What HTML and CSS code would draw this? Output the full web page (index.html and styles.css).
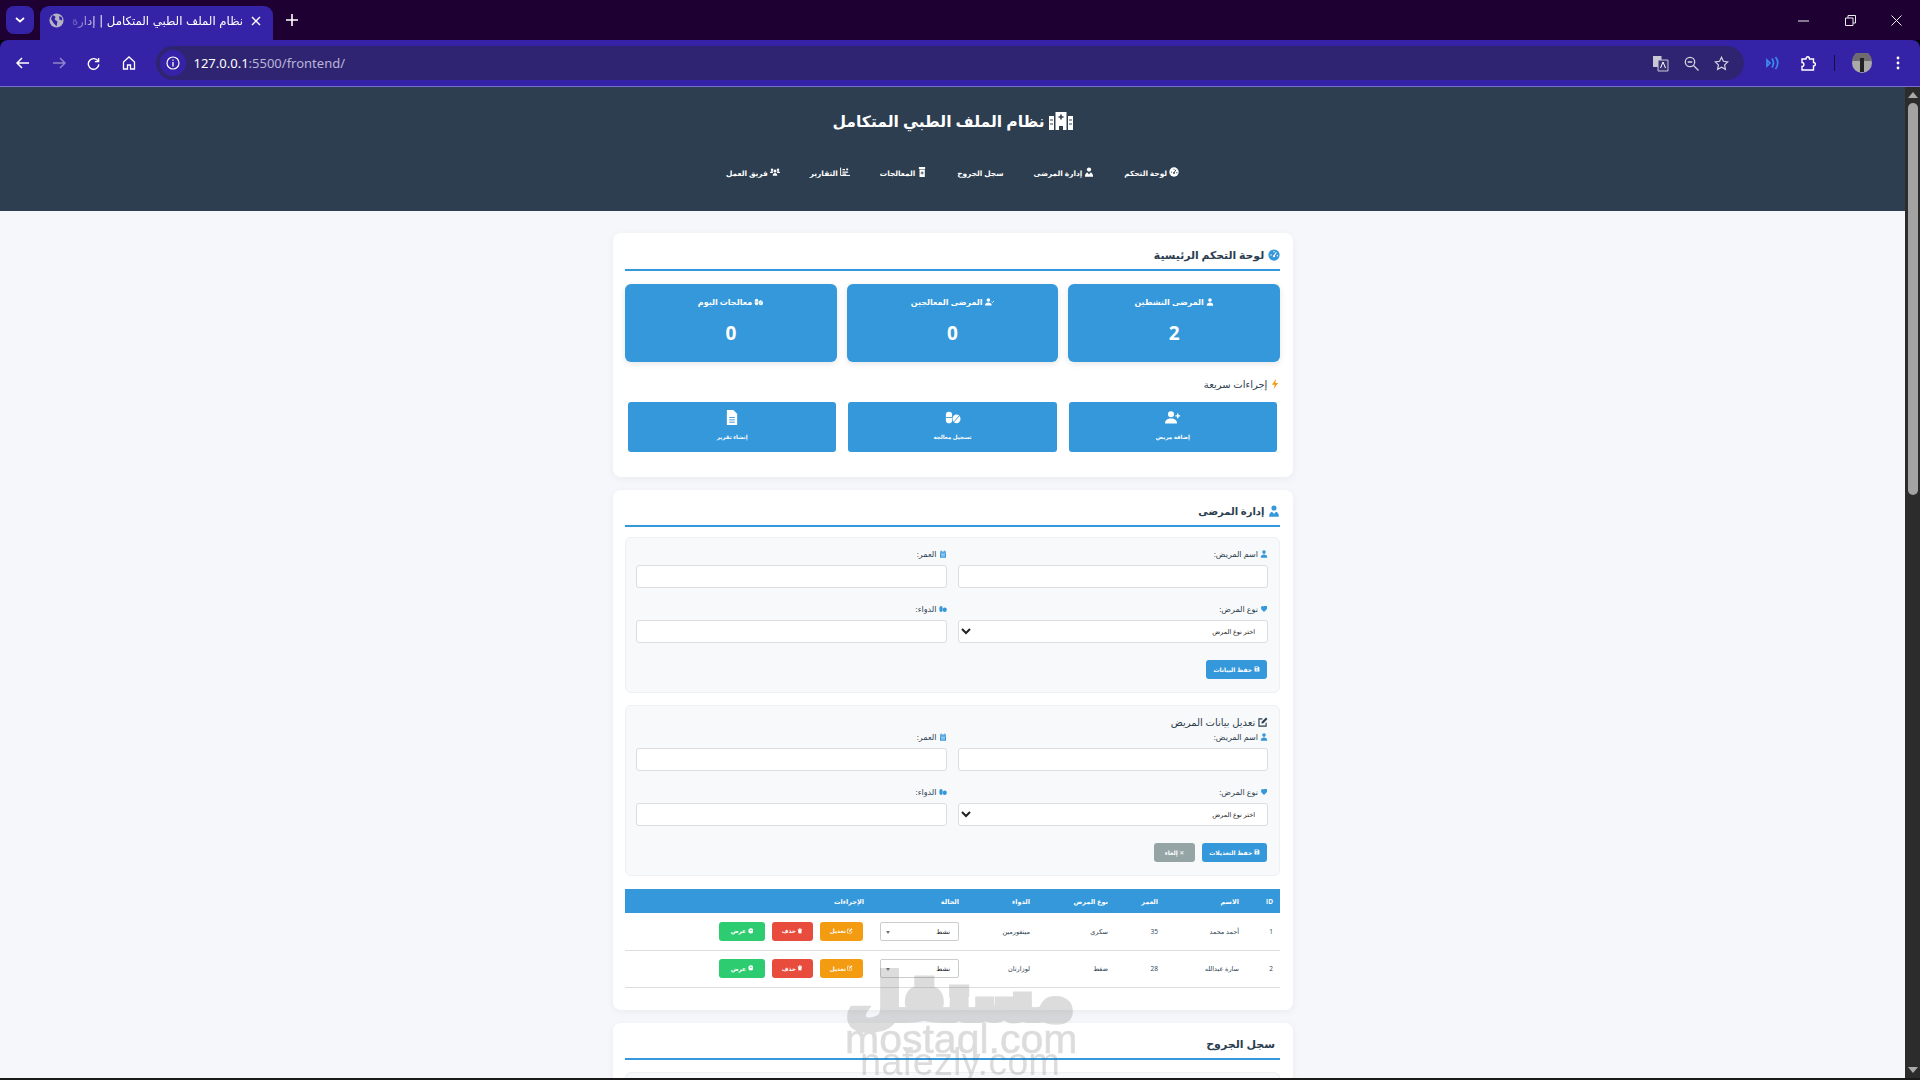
FILE: index.html
```html
<!DOCTYPE html>
<html lang="ar">
<head>
<meta charset="utf-8">
<title>نظام الملف الطبي المتكامل</title>
<link rel="stylesheet" href="styles.css">
</head>
<body>
<svg class="sprite" width="0" height="0" aria-hidden="true">
  <symbol id="i-user" viewBox="0 0 16 16"><circle cx="8" cy="4.2" r="3.6" fill="currentColor"/><path d="M1.500 15.500c0-4.400 2.600-6.300 6.500-6.300s6.500 1.900 6.500 6.300z" fill="currentColor"/></symbol>
  <symbol id="i-doctor" viewBox="0 0 16 16"><circle cx="8" cy="4" r="3.400" fill="currentColor"/><path d="M1.500 15.500c0-4.400 2-6.200 4-6.600L8 12l2.500-3.100c2 .4 4 2.200 4 6.600z" fill="currentColor"/></symbol>
  <symbol id="i-gauge" viewBox="0 0 16 16"><circle cx="8" cy="8" r="7.500" fill="currentColor"/><path d="M8 9l3.200-4.600" stroke="var(--cut,#fff)" stroke-width="1.500"/><circle cx="8" cy="9.500" r="1.500" fill="var(--cut,#fff)"/><circle cx="4" cy="8" r=".9" fill="var(--cut,#fff)"/><circle cx="8" cy="3.500" r=".9" fill="var(--cut,#fff)"/><circle cx="12.500" cy="9" r=".9" fill="var(--cut,#fff)"/></symbol>
  <symbol id="i-pills" viewBox="0 0 18 16"><rect x="1" y="1.500" width="7" height="13" rx="3.500" fill="currentColor"/><ellipse cx="13" cy="9.500" rx="4.500" ry="5" fill="currentColor"/><path d="M1 8h7M10 13l6-7" stroke="var(--cut,#3498db)" stroke-width="1"/></symbol>
  <symbol id="i-file" viewBox="0 0 14 16"><path d="M1.500 0H8.500L12.500 4V16H1.500z" fill="currentColor"/><path d="M4 8h6M4 10.500h6M4 13h6" stroke="#3498db"/></symbol>
  <symbol id="i-save" viewBox="0 0 16 16"><path d="M1.500 1.500h10l3 3v10h-13z" fill="currentColor"/><rect x="4" y="3" width="6" height="3" fill="#3498db"/><circle cx="8" cy="10.500" r="2" fill="#3498db"/></symbol>
  <symbol id="i-edit" viewBox="0 0 16 16"><path d="M13 9v5.500H1.500V3H7" fill="none" stroke="currentColor" stroke-width="1.800"/><path d="M6 7.500 12.800.8l2.400 2.400L8.500 10 5.500 10.500z" fill="currentColor"/></symbol>
  <symbol id="i-trash" viewBox="0 0 14 16"><path d="M1 2.500h12v2H1zM5 1h4v2H5zM2 5.500h10L11 15.500H3z" fill="currentColor"/></symbol>
  <symbol id="i-eye" viewBox="0 0 16 16"><circle cx="8" cy="8" r="7" fill="currentColor"/><circle cx="8" cy="6.500" r="2" fill="#2ecc71"/></symbol>
  <symbol id="i-cal" viewBox="0 0 14 16"><path d="M1 3h12v12.500H1z" fill="currentColor"/><path d="M3.500 1v3M10.500 1v3" stroke="currentColor" stroke-width="1.500"/><path d="M1 6h12M3 9h8M3 12h8M5 7v7M9 7v7" stroke="#f8f9fa" stroke-width=".8"/></symbol>
  <symbol id="i-tag" viewBox="0 0 16 16"><path d="M2 8 8 2h6v6l-6 6z" fill="currentColor"/><circle cx="5" cy="5" r="3" fill="currentColor"/></symbol>
  <symbol id="i-hospital" viewBox="0 0 24 18"><path d="M0 4h5v14H0zM19 4h5v14h-5zM6.500 0h11v18h-3.500v-4h-4v4H6.500z" fill="currentColor"/><path d="M12 2.500v5M9.500 5h5" stroke="#2c3e50" stroke-width="1.600"/><path d="M1 8h3M1 12h3M20 8h3M20 12h3" stroke="#2c3e50"/></symbol>
  <symbol id="i-chart" viewBox="0 0 16 14"><path d="M1 0v12.500h15" fill="none" stroke="currentColor" stroke-width="1.600"/><path d="M4 2h4v2H4zM4 6h9v2H4zM4 9.500h6v1.800H4zM10 1.500h3v2.500h-3z" fill="currentColor"/></symbol>
  <symbol id="i-bottle" viewBox="0 0 14 16"><path d="M2 0h10v3H2zM3 4h8.500v12H3z" fill="currentColor"/><path d="M7.200 7v5M4.800 9.500h5" stroke="#2c3e50" stroke-width="1.300"/></symbol>
  <symbol id="i-team" viewBox="0 0 20 16"><circle cx="10" cy="6" r="3" fill="currentColor"/><circle cx="4" cy="3.500" r="2.500" fill="currentColor"/><circle cx="16" cy="3.500" r="2.500" fill="currentColor"/><path d="M5.500 15.500c0-4 1.500-5.500 4.500-5.500s4.500 1.500 4.500 5.500zM0 10c0-2.500 1.500-3.500 4-3.500 1 0 1.500.2 2 .5-.5 1-.5 2 0 3H0zM20 10c0-2.500-1.500-3.500-4-3.500-1 0-1.500.2-2 .5.500 1 .500 2 0 3h6z" fill="currentColor"/></symbol>
  <symbol id="i-usercheck" viewBox="0 0 20 16"><circle cx="7" cy="4" r="3.700" fill="currentColor"/><path d="M0 15.500c0-4.400 3-6.300 7-6.300s7 1.900 7 6.300z" fill="currentColor"/><path d="M13.500 7l2.200 2.200 3.800-4.200" fill="none" stroke="currentColor" stroke-width="1.600"/></symbol>
  <symbol id="i-userplus" viewBox="0 0 20 16"><circle cx="7.500" cy="4" r="3.800" fill="currentColor"/><path d="M0 15.500c0-4.400 3-6.300 7.500-6.300s7.500 1.900 7.500 6.300z" fill="currentColor"/><path d="M16 3v6M13 6h6" stroke="currentColor" stroke-width="1.800"/></symbol>
  <symbol id="i-bolt" viewBox="0 0 12 16"><path d="M7.500 0 1 9h4.500L4 16l7-9.500H6.500z" fill="currentColor"/></symbol>
</svg>

<header class="browser">
  <div class="tabstrip">
    <button class="tab-search"><svg width="10" height="6" viewBox="0 0 10 6"><path d="M1 1l4 3.500L9 1" fill="none" stroke="#fff" stroke-width="1.700"/></svg></button>
    <div class="tab">
      <svg width="15" height="15" viewBox="0 0 16 16"><circle cx="8" cy="8" r="7.500" fill="#b4b3c4"/><path d="M4 2l3 2-1 3 3 2-1 5-3-3-3-5zM11 3l3 2v3l-3-1z" fill="#3423a6"/></svg>
      <span class="tab-title">نظام الملف الطبي المتكامل | إدارة</span>
      <svg width="10" height="10" viewBox="0 0 10 10"><path d="M1 1l8 8M9 1l-8 8" stroke="#fff" stroke-width="1.400"/></svg>
    </div>
    <svg class="newtab" width="12" height="12" viewBox="0 0 12 12"><path d="M6 0v12M0 6h12" stroke="#fff" stroke-width="1.600"/></svg>
    <div class="win-controls">
      <svg width="12" height="2" viewBox="0 0 12 2"><path d="M0 1h11" stroke="#eee"/></svg>
      <svg width="11" height="11" viewBox="0 0 11 11"><path d="M.5 3h7.500v7.500H.5zM3 3V.5h7.500V8H8" fill="none" stroke="#eee"/></svg>
      <svg width="11" height="11" viewBox="0 0 11 11"><path d="M.5.5l10 10M10.500.5l-10 10" stroke="#eee"/></svg>
    </div>
  </div>
  <div class="toolbar">
    <div class="nav-icons">
      <svg width="14" height="12" viewBox="0 0 14 12"><path d="M13 6H1.500M6 1 1 6l5 5" fill="none" stroke="#fff" stroke-width="1.500"/></svg>
      <svg width="14" height="12" viewBox="0 0 14 12"><path d="M1 6h11.500M8 1l5 5-5 5" fill="none" stroke="#8f86c9" stroke-width="1.500"/></svg>
      <svg width="13" height="13" viewBox="0 0 14 14"><path d="M12 4.500A5.700 5.700 0 1 0 12.800 8M12.500 1v4h-4" fill="none" stroke="#fff" stroke-width="1.500"/></svg>
      <svg width="14" height="14" viewBox="0 0 14 14"><path d="M1.500 13V6L7 1l5.500 5v7H8.500V9h-3v4z" fill="none" stroke="#fff" stroke-width="1.300"/></svg>
    </div>
    <div class="omnibox">
      <span class="site-info"><svg width="14" height="14" viewBox="0 0 14 14"><circle cx="7" cy="7" r="6" fill="none" stroke="#fff" stroke-width="1.200"/><path d="M7 6v4.500M7 3.500v1.300" stroke="#fff" stroke-width="1.300"/></svg></span>
      <span class="url"><b>127.0.0.1</b>:5500/frontend/</span>
      <div class="omni-actions">
        <svg width="17" height="17" viewBox="0 0 17 17"><path d="M1 1h8.500v11H1z" fill="#c9c7d6"/><path d="M6 5h10v11H6z" fill="#3a3175" stroke="#c9c7d6"/><path d="M8.500 13l2.500-6 2.500 6" fill="none" stroke="#fff"/></svg>
        <svg width="15" height="15" viewBox="0 0 15 15"><circle cx="6" cy="6" r="4.700" fill="none" stroke="#d5d3df" stroke-width="1.300"/><path d="M3.700 6h4.600M9.500 9.500l5 5" stroke="#d5d3df" stroke-width="1.300"/></svg>
        <svg width="15" height="15" viewBox="0 0 15 15"><path d="M7.500 1.300l1.900 4 4.300.6-3.100 3 .8 4.400-3.900-2.100-3.900 2.100.8-4.400-3.100-3 4.300-.6z" fill="none" stroke="#d5d3df" stroke-width="1.200"/></svg>
      </div>
    </div>
    <div class="ext-icons">
      <svg width="14" height="14" viewBox="0 0 14 14"><path d="M1 4l3 3-3 3zM6 2.500c2 3 2 6 0 9M9.500 1c3 3.500 3 8.500 0 12" fill="none" stroke="#3c8cf0" stroke-width="1.700"/></svg>
      <svg class="ext-puzzle" width="15" height="15" viewBox="0 0 15 15"><path d="M1 3h4c0-3 3.500-3 3.500 0h4v3.500c2.500 0 2.500 3.500 0 3.500v4H1v-3.500c2.500 0 2.500-4 0-4z" fill="none" stroke="#fff" stroke-width="1.400"/></svg>
      <span class="ext-sep"></span>
      <span class="avatar"><svg width="20" height="20" viewBox="0 0 20 20"><circle cx="10" cy="10" r="10" fill="#aaa"/><path d="M0 8a10 10 0 0 1 20 0z" fill="#6f6a6f"/><path d="M8 5h4v14H8z" fill="#222"/></svg></span>
      <svg class="ext-menu" width="4" height="14" viewBox="0 0 4 14"><circle cx="2" cy="2" r="1.400" fill="#fff"/><circle cx="2" cy="7" r="1.400" fill="#fff"/><circle cx="2" cy="12" r="1.400" fill="#fff"/></svg>
    </div>
  </div>
</header>

<div class="viewport">
  <div class="page" dir="rtl">
    <div class="site-header">
      <h1><svg class="ico"><use href="#i-hospital"/></svg> نظام الملف الطبي المتكامل</h1>
      <nav class="main-nav">
        <a><svg class="ico"><use href="#i-gauge"/></svg> لوحة التحكم</a>
        <a><svg class="ico"><use href="#i-doctor"/></svg> إدارة المرضى</a>
        <a>سجل الجروح</a>
        <a><svg class="ico"><use href="#i-bottle"/></svg> المعالجات</a>
        <a><svg class="ico"><use href="#i-chart"/></svg> التقارير</a>
        <a><svg class="ico"><use href="#i-team"/></svg> فريق العمل</a>
      </nav>
    </div>

    <main class="content">
      <section class="card card-dash">
        <h2 class="card-title"><svg class="ico blue"><use href="#i-gauge"/></svg> لوحة التحكم الرئيسية</h2>
        <div class="stats">
          <div class="stat"><h3><svg class="ico"><use href="#i-user"/></svg> المرضى النشطين</h3><p>2</p></div>
          <div class="stat"><h3><svg class="ico wide"><use href="#i-usercheck"/></svg> المرضى المعالجين</h3><p>0</p></div>
          <div class="stat"><h3><svg class="ico wide"><use href="#i-pills"/></svg> معالجات اليوم</h3><p>0</p></div>
        </div>
        <h4 class="quick-title"><svg class="ico orange"><use href="#i-bolt"/></svg> إجراءات سريعة</h4>
        <div class="quick">
          <button class="quick-btn"><svg><use href="#i-userplus"/></svg><span>إضافة مريض</span></button>
          <button class="quick-btn"><svg><use href="#i-pills"/></svg><span>تسجيل معالجة</span></button>
          <button class="quick-btn"><svg><use href="#i-file"/></svg><span>إنشاء تقرير</span></button>
        </div>
      </section>

      <section class="card card-patients">
        <h2 class="card-title"><svg class="ico blue"><use href="#i-doctor"/></svg> إدارة المرضى</h2>

        <form class="form-box form-add">
          <div class="form-grid">
            <div class="field"><label><svg class="ico blue"><use href="#i-user"/></svg> اسم المريض:</label><input type="text"></div>
            <div class="field"><label><svg class="ico blue"><use href="#i-cal"/></svg> العمر:</label><input type="text"></div>
            <div class="field"><label><svg class="ico blue"><use href="#i-tag"/></svg> نوع المرض:</label><select><option>اختر نوع المرض</option></select></div>
            <div class="field"><label><svg class="ico blue"><use href="#i-pills"/></svg> الدواء:</label><input type="text"></div>
          </div>
          <div class="form-actions"><button type="button" class="btn btn-save"><svg class="ico"><use href="#i-save"/></svg> حفظ البيانات</button></div>
        </form>

        <form class="form-box form-edit">
          <h3 class="edit-title"><svg class="ico"><use href="#i-edit"/></svg> تعديل بيانات المريض</h3>
          <div class="form-grid">
            <div class="field"><label><svg class="ico blue"><use href="#i-user"/></svg> اسم المريض:</label><input type="text"></div>
            <div class="field"><label><svg class="ico blue"><use href="#i-cal"/></svg> العمر:</label><input type="text"></div>
            <div class="field"><label><svg class="ico blue"><use href="#i-tag"/></svg> نوع المرض:</label><select><option>اختر نوع المرض</option></select></div>
            <div class="field"><label><svg class="ico blue"><use href="#i-pills"/></svg> الدواء:</label><input type="text"></div>
          </div>
          <div class="form-actions"><button type="button" class="btn btn-save2"><svg class="ico"><use href="#i-save"/></svg> حفظ التعديلات</button><button type="button" class="btn btn-cancel">✕ إلغاء</button></div>
        </form>

        <table class="patients">
          <thead><tr><th>ID</th><th>الاسم</th><th>العمر</th><th>نوع المرض</th><th>الدواء</th><th>الحالة</th><th>الإجراءات</th></tr></thead>
          <tbody>
            <tr><td>1</td><td>أحمد محمد</td><td>35</td><td>سكري</td><td>ميتفورمين</td><td><select class="status"><option>نشط</option></select></td><td><div class="row-actions"><button class="mini m-edit"><svg class="ico"><use href="#i-edit"/></svg> تعديل</button><button class="mini m-del"><svg class="ico"><use href="#i-trash"/></svg> حذف</button><button class="mini m-view"><svg class="ico"><use href="#i-eye"/></svg> عرض</button></div></td></tr>
            <tr><td>2</td><td>سارة عبدالله</td><td>28</td><td>ضغط</td><td>لوزارتان</td><td><select class="status"><option>نشط</option></select></td><td><div class="row-actions"><button class="mini m-edit"><svg class="ico"><use href="#i-edit"/></svg> تعديل</button><button class="mini m-del"><svg class="ico"><use href="#i-trash"/></svg> حذف</button><button class="mini m-view"><svg class="ico"><use href="#i-eye"/></svg> عرض</button></div></td></tr>
          </tbody>
        </table>
      </section>

      <section class="card card-wounds">
        <h2 class="card-title">سجل الجروح</h2>
        <div class="form-box stub"></div>
      </section>
    </main>
  </div>
  <div class="scrollbar">
    <span class="arrow up"></span>
    <span class="thumb"></span>
    <span class="arrow down"></span>
  </div>
  <div class="watermark" aria-hidden="true">
    <div class="wm-ar">مستقل</div>
    <div class="wm-en">mostaql.com</div>
    <div class="wm-en2">nafezly.com</div>
  </div>
</div>
<div class="bottom-edge"></div>
</body>
</html>
```
FILE: styles.css
```css
* { box-sizing: border-box; }
html, body { margin: 0; height: 100%; overflow: hidden; }
body { display: flex; flex-direction: column; height: 1080px; background: #000; font-family: "Open Sans", "DejaVu Sans", sans-serif; }
.sprite { position: absolute; }

.browser { flex: none; height: 87px; display: flex; flex-direction: column; font-family: "Noto Sans", "DejaVu Sans", sans-serif; }
.tabstrip { height: 40px; background: #1f0033; display: flex; align-items: flex-start; padding: 6px 0 0 6px; position: relative; }
.tab-search { width: 28px; height: 28px; background: #3423a6; border: 0; border-radius: 8px; padding: 0; display: flex; align-items: center; justify-content: center; }
.tab { margin-left: 6px; width: 233px; height: 34px; background: #3423a6; border-radius: 9px 9px 0 0; display: flex; align-items: center; gap: 8px; padding: 0 12px 5px 9px; color: #fff; }
.tab-title { flex: 1; font-size: 11.700px; white-space: nowrap; overflow: hidden; direction: rtl; text-align: right; font-family: "DejaVu Sans", sans-serif; -webkit-mask-image: linear-gradient(to right, rgba(0,0,0,.2), #000 32px); mask-image: linear-gradient(to right, rgba(0,0,0,.2), #000 32px); }
.newtab { margin: 8px 0 0 13px; }
.win-controls { margin-left: auto; margin-top: 9px; display: flex; align-items: center; gap: 35px; padding-right: 18px; }
.toolbar { height: 47px; background: #3423a6; border-bottom: 1px solid #7a6fd0; display: flex; align-items: center; padding: 0 0 0 16px; border-radius: 8px 8px 0 0; }
.nav-icons { display: flex; align-items: center; gap: 21.500px; }
.omnibox { margin-left: 20px; width: 1588px; height: 34px; border-radius: 17px; background: #2f2472; display: flex; align-items: center; padding: 0 15px 0 4px; flex: none; }
.site-info { width: 26px; height: 26px; border-radius: 50%; background: #3423a6; display: flex; align-items: center; justify-content: center; }
.url { margin-left: 8px; font-size: 13px; color: #b9b5d8; }
.url b { font-weight: 400; color: #fff; }
.omni-actions { margin-left: auto; display: flex; align-items: center; gap: 15px; }
.ext-icons { margin-left: 22px; display: flex; align-items: center; }
.ext-puzzle { margin-left: 21px; }
.ext-sep { width: 1px; height: 16px; background: #15103f; margin: 0 17px 0 18px; }
.avatar { display: flex; }
.ext-menu { margin-left: 24px; }

.viewport { flex: none; height: 991px; display: flex; position: relative; overflow: hidden; }
.page { width: 1905px; flex: none; background: #f5f7fa; color: #2c3e50; overflow: hidden; }
.scrollbar { width: 15px; flex: none; background: #2c2c2c; display: flex; flex-direction: column; align-items: center; padding: 5px 0; }
.arrow { width: 0; height: 0; border-left: 5px solid transparent; border-right: 5px solid transparent; }
.arrow.up { border-bottom: 6px solid #aaa; }
.arrow.down { border-top: 6px solid #aaa; margin-top: auto; }
.thumb { width: 10px; height: 392px; margin-top: 5px; background: #a3a3a3; border-radius: 5px; }

.ico { width: 1em; height: 1em; vertical-align: -0.12em; fill: currentColor; }
.ico.wide { width: 1.2em; }
.blue { color: #3498db; }
.orange { color: #f39c12; }

.site-header { --cut: #2c3e50; background: #2c3e50; color: #fff; height: 124px; padding-top: 22px; text-align: center; }
.site-header h1 { margin: 0; font-size: 15.600px; font-weight: 700; line-height: 24px; }
.site-header h1 .ico { width: 24px; height: 18px; vertical-align: -3px; }
.main-nav { margin-top: 34px; display: flex; justify-content: center; gap: 30px; }
.main-nav a { font-size: 7.400px; font-weight: 700; line-height: 12px; white-space: nowrap; }
.main-nav .ico { font-size: 10px; }

.content { margin: 22px 612px 0 613px; display: flex; flex-direction: column; gap: 13px; }
.card { background: #fff; border-radius: 8px; box-shadow: 0 2px 8px rgba(0,0,0,.05); padding: 0 13px 0 12px; }
.card-dash { height: 244px; padding-top: 12px; }
.card-patients { height: 520px; padding-top: 11px; }
.card-wounds { height: 60px; padding-top: 11px; }
.card-title { margin: 0; height: 26px; font-size: 10.800px; font-weight: 700; line-height: 20px; border-bottom: 2px solid #3498db; color: #2c3e50; }
.card-title .ico { width: 12px; height: 12px; vertical-align: -2px; margin-left: 1px; }
.card-patients .card-title { font-size: 10px; }
.card-wounds .card-title { font-size: 11px; padding-right: 5px; }
.stats { margin-top: 13px; display: grid; grid-template-columns: repeat(3, 1fr); gap: 10px; }
.stat { height: 78px; background: #3498db; color: #fff; border-radius: 6px; text-align: center; padding-top: 12px; box-shadow: 0 2px 6px rgba(0,0,0,.1); }
.stat h3 { margin: 0; font-size: 8px; font-weight: 700; line-height: 12px; }
.stat p { margin: 12px 0 0; font-size: 19px; font-weight: 700; line-height: 26px; }
.quick-title { margin: 15px 0 0; font-size: 10px; font-weight: 400; line-height: 14px; color: #2c3e50; }
.quick { margin-top: 11px; padding: 0 3px; display: grid; grid-template-columns: repeat(3, 1fr); gap: 12px; }
.quick-btn { height: 50px; background: #3498db; border: 0; border-radius: 3px; color: #fff; display: flex; flex-direction: column; align-items: center; padding: 8px 0 0; font-family: inherit; }
.quick-btn svg { width: 16px; height: 15px; fill: #fff; color: #fff; }
.quick-btn span { margin-top: 8px; font-size: 5.500px; font-weight: 700; line-height: 9px; }

.form-box { background: #f8f9fa; border: 1px solid #eef0f2; border-radius: 6px; margin-top: 10px; padding: 10px 11px 0 10px; }
.form-add { height: 156px; }
.form-edit { height: 171px; margin-top: 12px; }
.stub { height: 10px; margin-top: 12px; }
.edit-title { margin: 0 0 3px; font-size: 10px; font-weight: 400; line-height: 12px; color: #2c3e50; }
.form-grid { display: grid; grid-template-columns: 1fr 1fr; column-gap: 11px; row-gap: 15px; }
.field { display: flex; flex-direction: column; }
.field label { font-size: 8px; line-height: 12px; margin-bottom: 5px; color: #2c3e50; }
.field input, .field select { height: 23px; width: 100%; background: #fff; border: 1px solid #ddd; border-radius: 3px; font-size: 6.500px; font-family: inherit; padding: 0 8px; color: #222; }
.form-actions { margin-top: 17px; padding-right: 1px; display: flex; justify-content: flex-start; gap: 7px; }
.btn { height: 19px; border: 0; border-radius: 3px; color: #fff; font-size: 6px; font-family: inherit; font-weight: 700; padding: 0; }
.btn-save { width: 61px; background: #3498db; }
.btn-save2 { width: 65px; background: #3498db; }
.btn-cancel { width: 41px; background: #95a5a6; }

.patients { width: 100%; margin-top: 13px; border-collapse: collapse; font-size: 6.500px; table-layout: fixed; }
.patients th { height: 24px; background: #3498db; color: #fff; font-weight: 700; text-align: right; padding: 0 7px; }
.patients td { height: 37px; border-bottom: 1px solid #ddd; text-align: right; padding: 0 7px; color: #2c3e50; }
.patients th:nth-child(1) { width: 34px; }
.patients th:nth-child(2) { width: 81px; }
.patients th:nth-child(3) { width: 50px; }
.patients th:nth-child(4) { width: 78px; }
.patients th:nth-child(5) { width: 71px; }
.patients th:nth-child(6) { width: 95px; }
.status { appearance: none; -webkit-appearance: none; width: 79px; height: 19px; background: #fff url("data:image/svg+xml,%3Csvg xmlns='http://www.w3.org/2000/svg' width='4' height='3'%3E%3Cpath d='M0 0h4L2 3z' fill='%23777'/%3E%3C/svg%3E") no-repeat 5px 8px; border: 1px solid #ccc; border-radius: 2px; font-size: 6.500px; font-family: inherit; padding: 0 8px; color: #222; }
.row-actions { display: flex; gap: 7px; margin-right: 1px; }
.mini { height: 19px; border: 0; border-radius: 3px; color: #fff; font-size: 5.800px; font-weight: 700; font-family: inherit; padding: 0; }
.m-edit { width: 43px; background: #f39c12; }
.m-del { width: 41px; background: #e74c3c; }
.m-view { width: 46px; background: #2ecc71; }

.watermark { position: absolute; left: 845px; top: 882px; width: 230px; text-align: center; color: #666; opacity: .22; pointer-events: none; font-family: "Liberation Sans", sans-serif; }
.wm-ar { font-family: "DejaVu Sans", sans-serif; font-weight: 700; font-size: 62px; line-height: 58px; direction: rtl; -webkit-text-stroke: 8px #666; }
.wm-en { font-size: 41px; line-height: 24px; -webkit-text-stroke: .6px #666; white-space: nowrap; }
.wm-en2 { font-size: 38px; line-height: 23px; white-space: nowrap; }
.bottom-edge { flex: 1; background: #1a1a1a; }
```
